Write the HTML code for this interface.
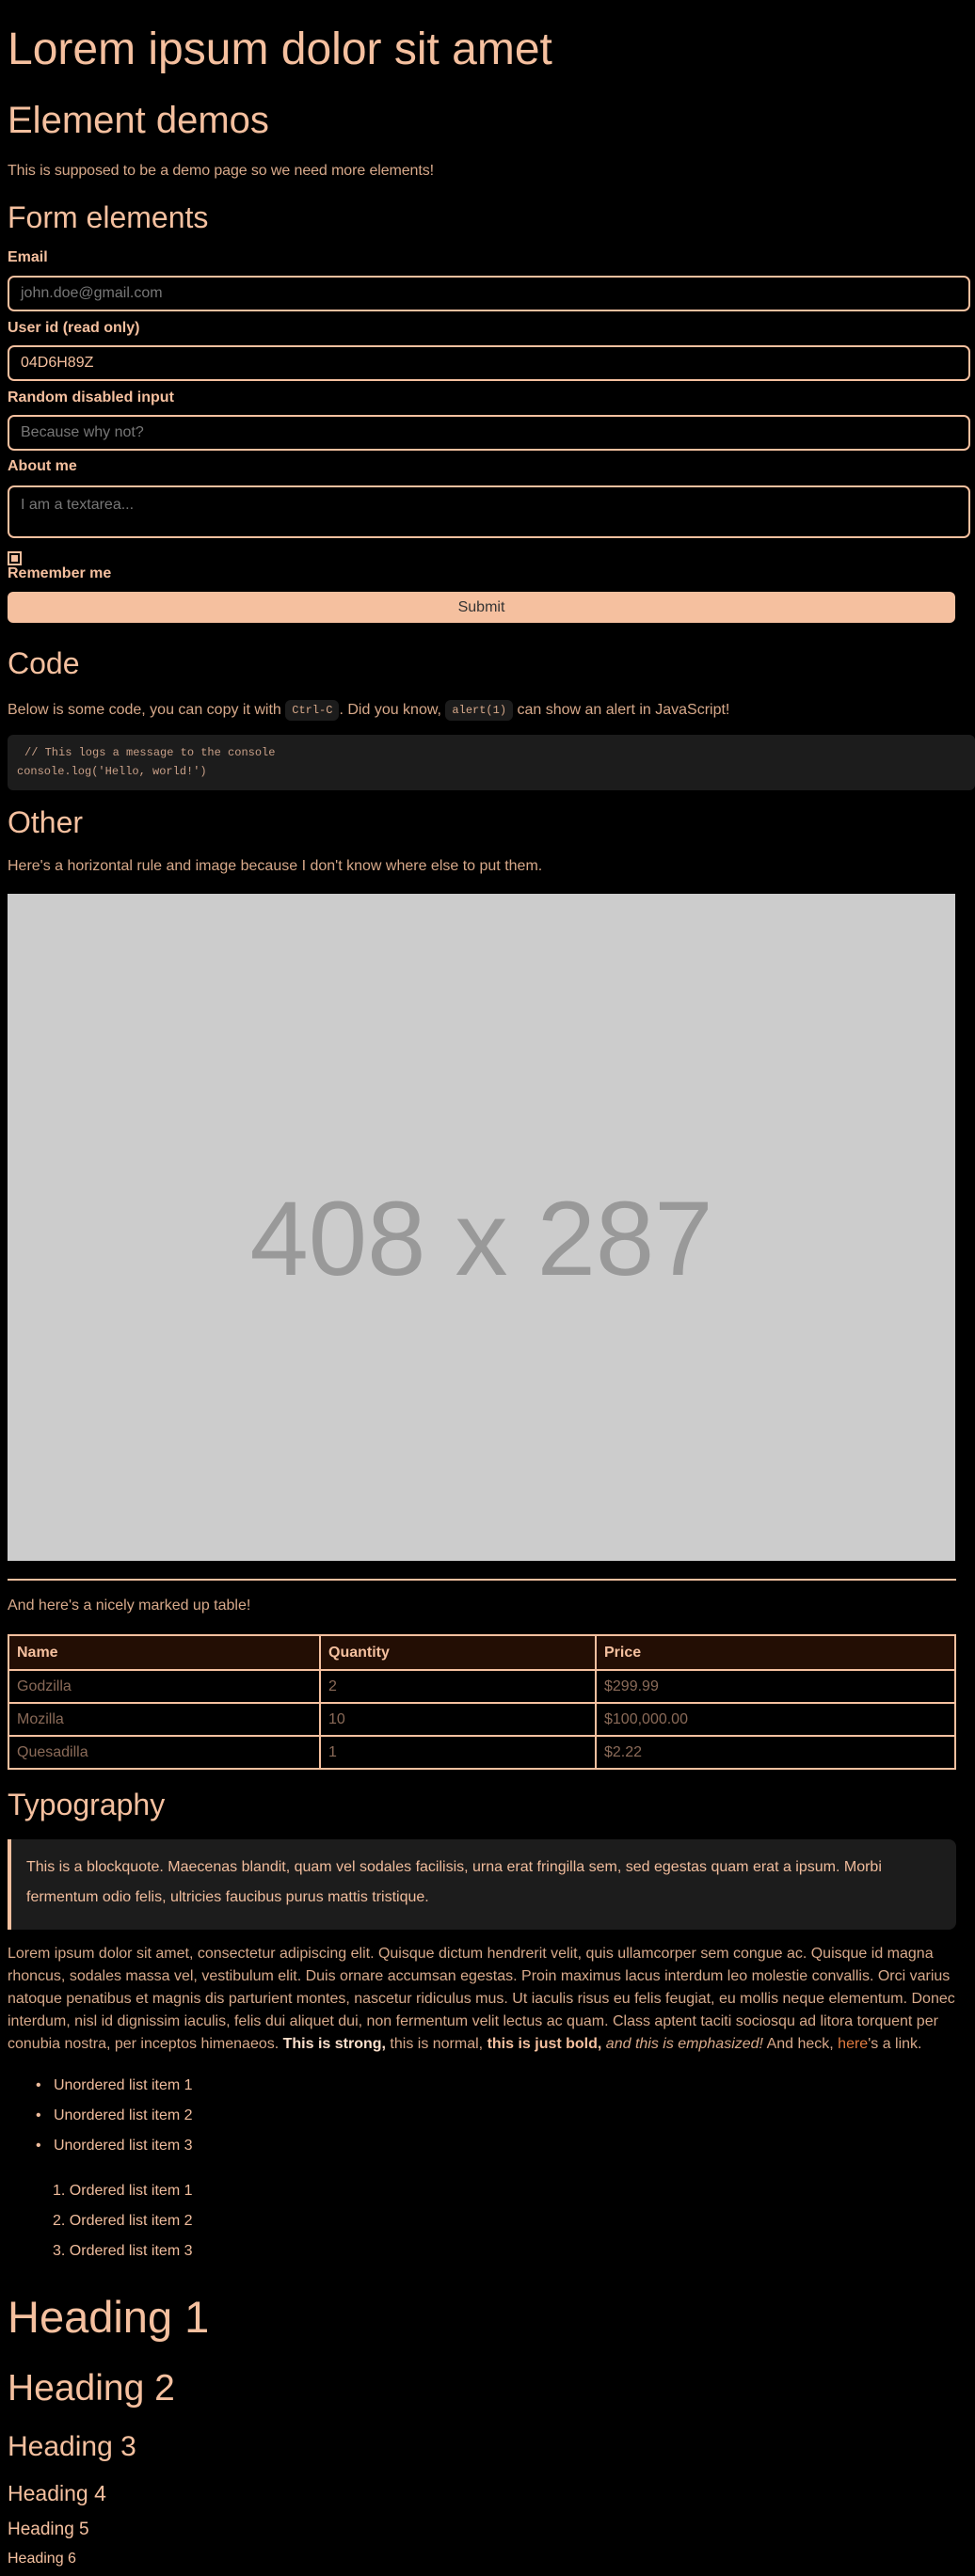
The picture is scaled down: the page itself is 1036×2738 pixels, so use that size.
<!DOCTYPE html>
<html><head><meta charset="utf-8"><style>
html,body{margin:0;padding:0;background:#000;width:1036px;height:2738px;overflow:hidden}
body{position:relative;font-family:"Liberation Sans",Arial,sans-serif;color:#f5c09f}
.a{position:absolute;left:8px;line-height:1;white-space:nowrap}
.p{font-size:16px;color:#d8a98a}
.lb{font-size:16px;font-weight:bold}
.in{position:absolute;left:8px;border:2px solid #f5c09f;border-radius:7px;display:flex;align-items:center;padding-left:12px;font-size:16px;color:#777;box-sizing:border-box;width:1023px;height:38px}
.chip{display:inline-block;background:#1c1c1c;border-radius:6px;font-family:"Liberation Mono",monospace;font-size:12px;padding:5px 7px;vertical-align:middle;color:#d8a98a}
.mono{font-family:"Liberation Mono",monospace;font-size:12px;color:#c9a088}
table{position:absolute;left:8px;top:1737px;width:1008px;border-collapse:collapse}
td,th{border:2px solid #f5c09f;height:35px;padding:0 0 0 8px;text-align:left;font-size:16px;box-sizing:border-box}
th{background:#230e04;font-weight:bold;height:37px}
td{color:#8a6a58}
</style></head><body>
<div class="a" style="top:29px;font-size:48px">Lorem ipsum dolor sit amet</div>
<div class="a" style="top:108px;font-size:40px">Element demos</div>
<div class="a p" style="top:174px;letter-spacing:-0.1px">This is supposed to be a demo page so we need more elements!</div>
<div class="a" style="top:215px;font-size:32px">Form elements</div>
<div class="a lb" style="top:266px">Email</div>
<div class="in" style="top:293px">john.doe@gmail.com</div>
<div class="a lb" style="top:341px">User id (read only)</div>
<div class="in" style="top:367px;color:#f5c09f">04D6H89Z</div>
<div class="a lb" style="top:415px">Random disabled input</div>
<div class="in" style="top:441px">Because why not?</div>
<div class="a lb" style="top:488px">About me</div>
<div class="in" style="top:516px;height:56px;align-items:flex-start;padding-top:10px">I am a textarea...</div>
<div style="position:absolute;left:8px;top:586px;width:11px;height:11px;border:2px solid #f5c09f"><div style="margin:2px;width:7px;height:7px;background:#f5c09f"></div></div>
<div class="a lb" style="top:602px">Remember me</div>
<div style="position:absolute;left:8px;top:629px;width:1007px;height:33px;background:#f5c09f;border-radius:6px;color:#333;font-size:16px;display:flex;align-items:center;justify-content:center">Submit</div>
<div class="a" style="top:689px;font-size:32px">Code</div>
<div class="a p" style="top:744px">Below is some code, you can copy it with <span class="chip">Ctrl-C</span>. Did you know, <span class="chip">alert(1)</span> can show an alert in JavaScript!</div>
<div style="position:absolute;left:8px;top:781px;width:1028px;height:59px;background:#1c1c1c;border-radius:6px"></div>
<div class="a mono" style="top:794px;left:26px">// This logs a message to the console</div>
<div class="a mono" style="top:814px;left:18px">console.log('Hello, world!')</div>
<div class="a" style="top:858px;font-size:32px">Other</div>
<div class="a p" style="top:913px">Here's a horizontal rule and image because I don't know where else to put them.</div>
<div style="position:absolute;left:8px;top:950px;width:1007px;height:709px;background:#ccc;display:flex;align-items:center;justify-content:center;color:#999;font-size:112px;padding-top:24px;box-sizing:border-box">408 x 287</div>
<div style="position:absolute;left:8px;top:1678px;width:1008px;height:2px;background:#f5c09f"></div>
<div class="a p" style="top:1699px">And here's a nicely marked up table!</div>
<table><tr><th style="width:331px">Name</th><th style="width:293px">Quantity</th><th>Price</th></tr>
<tr><td>Godzilla</td><td>2</td><td>$299.99</td></tr>
<tr><td>Mozilla</td><td>10</td><td>$100,000.00</td></tr>
<tr><td>Quesadilla</td><td>1</td><td>$2.22</td></tr></table>
<div class="a" style="top:1902px;font-size:32px">Typography</div>
<div style="position:absolute;left:8px;top:1955px;width:1004px;height:96px;background:#1c1c1c;border-left:4px solid #f5c09f;border-radius:0 8px 8px 0"></div>
<div class="a" style="left:28px;top:1969px;font-size:16px;line-height:32px;color:#f0bc9c">This is a blockquote. Maecenas blandit, quam vel sodales facilisis, urna erat fringilla sem, sed egestas quam erat a ipsum. Morbi<br>fermentum odio felis, ultricies faucibus purus mattis tristique.</div>
<div class="a p" style="top:2065px;line-height:24px">Lorem ipsum dolor sit amet, consectetur adipiscing elit. Quisque dictum hendrerit velit, quis ullamcorper sem congue ac. Quisque id magna<br>rhoncus, sodales massa vel, vestibulum elit. Duis ornare accumsan egestas. Proin maximus lacus interdum leo molestie convallis. Orci varius<br>natoque penatibus et magnis dis parturient montes, nascetur ridiculus mus. Ut iaculis risus eu felis feugiat, eu mollis neque elementum. Donec<br>interdum, nisl id dignissim iaculis, felis dui aliquet dui, non fermentum velit lectus ac quam. Class aptent taciti sociosqu ad litora torquent per<br>conubia nostra, per inceptos himenaeos. <b style="color:#fde0cc">This is strong,</b> this is normal, <b style="color:#f5c09f">this is just bold,</b> <i>and this is emphasized!</i> And heck, <span style="color:#e07a40">here</span>'s a link.</div>
<div class="a p" style="top:2209px;left:38px;color:#f0bc9c">•&nbsp;&nbsp;&nbsp;Unordered list item 1</div>
<div class="a p" style="top:2241px;left:38px;color:#f0bc9c">•&nbsp;&nbsp;&nbsp;Unordered list item 2</div>
<div class="a p" style="top:2273px;left:38px;color:#f0bc9c">•&nbsp;&nbsp;&nbsp;Unordered list item 3</div>
<div class="a p" style="top:2321px;left:56px;color:#f0bc9c">1. Ordered list item 1</div>
<div class="a p" style="top:2353px;left:56px;color:#f0bc9c">2. Ordered list item 2</div>
<div class="a p" style="top:2385px;left:56px;color:#f0bc9c">3. Ordered list item 3</div>
<div class="a" style="top:2439px;font-size:47px">Heading 1</div>
<div class="a" style="top:2519px;font-size:39px">Heading 2</div>
<div class="a" style="top:2586px;font-size:30px">Heading 3</div>
<div class="a" style="top:2639px;font-size:23px">Heading 4</div>
<div class="a" style="top:2679px;font-size:19px">Heading 5</div>
<div class="a" style="top:2712px;font-size:16px">Heading 6</div>
</body></html>
